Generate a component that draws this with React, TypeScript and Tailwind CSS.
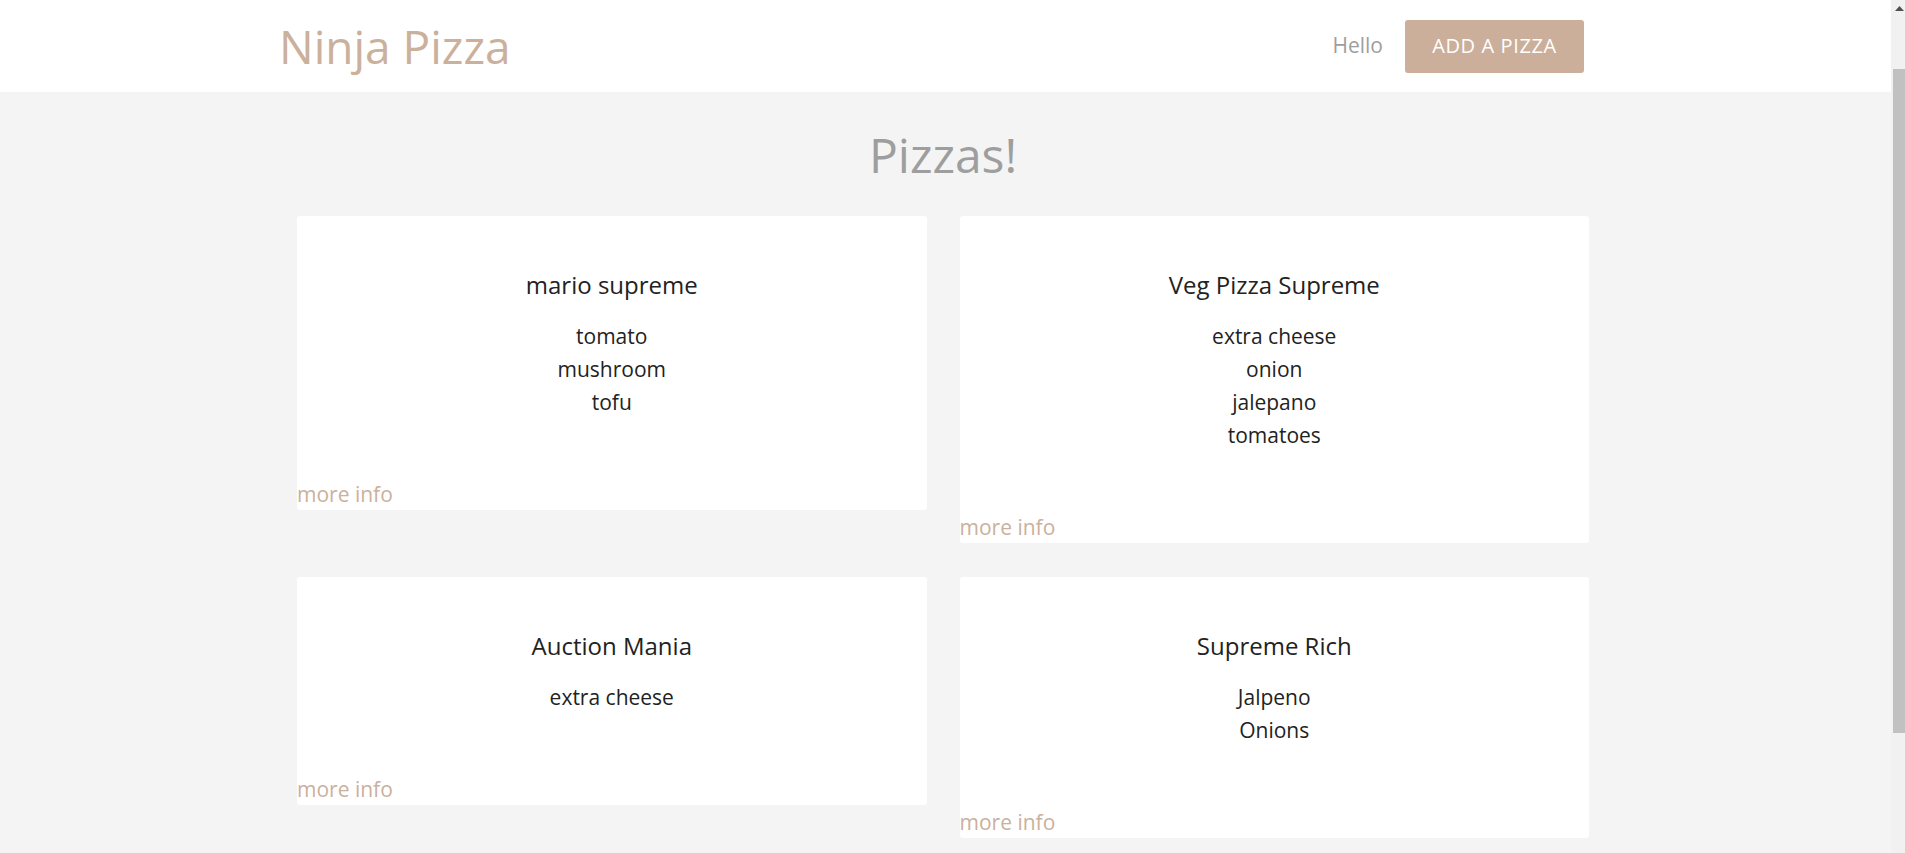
const PIZZAS = [
  { title: "mario supreme", ingredients: ["tomato", "mushroom", "tofu"] },
  {
    title: "Veg Pizza Supreme",
    ingredients: ["extra cheese", "onion", "jalepano", "tomatoes"],
  },
  { title: "Auction Mania", ingredients: ["extra cheese"] },
  { title: "Supreme Rich", ingredients: ["Jalpeno", "Onions"] },
];

function PizzaCard({ title, ingredients }: { title: string; ingredients: string[] }) {
  return (
    <div className="rounded-[3px] bg-white pb-[2px]">
      <div className="pt-[53px] text-center text-[#222]">
        <h3 className="text-[24px] leading-[32px] font-normal">{title}</h3>
        <ul className="mt-[19px]">
          {ingredients.map((item) => (
            <li key={item} className="text-[21px] leading-[33px]">
              {item}
            </li>
          ))}
        </ul>
      </div>
      <a href="#" className="mt-[61px] block text-[21px] leading-[28px] text-[#cbb09c]">
        more info
      </a>
    </div>
  );
}

function Scrollbar() {
  return (
    <div className="flex h-screen w-[14px] shrink-0 flex-col bg-[#f1f1f1]">
      <svg width="14" height="17" viewBox="0 0 14 17" className="shrink-0">
        <polygon points="4,11 8.5,6 13,11" fill="#505050" />
      </svg>
      <div className="ml-[2px] mt-[52px] h-[664px] bg-[#c1c1c1]" />
    </div>
  );
}

export default function App() {
  return (
    <div className="flex h-screen overflow-hidden font-['Open_Sans',sans-serif]">
      <div className="flex-1 overflow-hidden bg-[#f4f4f4]">
        <nav className="flex h-[92px] items-center bg-white pl-[279px] pr-[307px]">
          <a href="#" className="text-[46px] leading-none text-[#cbb09c]">
            Ninja Pizza
          </a>
          <div className="ml-auto flex items-center gap-[22px]">
            <span className="text-[21px] text-[#9e9e9e]">Hello</span>
            <a
              href="#"
              className="flex h-[53px] w-[179px] items-center justify-center rounded-[3px] bg-[#cbaf9a] text-[20px] tracking-[0.6px] text-white uppercase"
            >
              Add a Pizza
            </a>
          </div>
        </nav>

        <main className="pl-[297px] pr-[302px]">
          <h1 className="mt-[38px] text-center text-[48px] leading-[50px] font-normal text-[#9e9e9e]">
            Pizzas!
          </h1>
          <div className="mt-[36px] grid grid-cols-2 items-start gap-x-[33px] gap-y-[34px]">
            {PIZZAS.map((pizza) => (
              <PizzaCard key={pizza.title} {...pizza} />
            ))}
          </div>
        </main>
      </div>
      <Scrollbar />
    </div>
  );
}
